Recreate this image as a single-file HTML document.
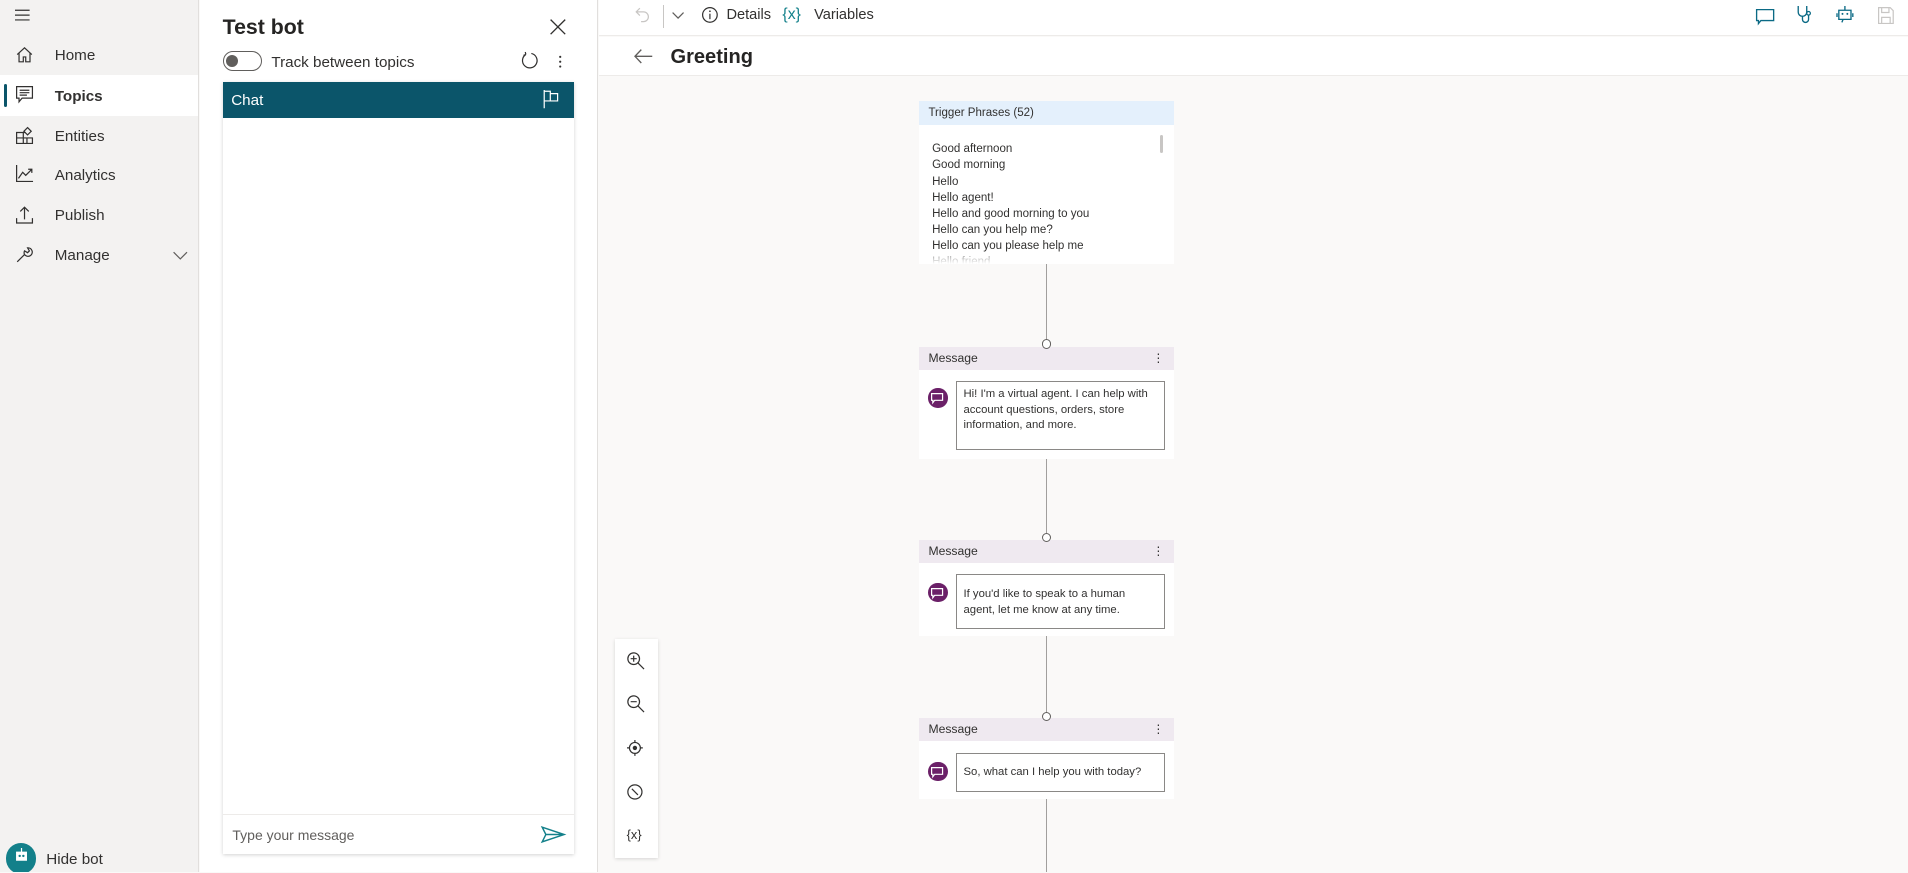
<!DOCTYPE html>
<html><head><meta charset="utf-8">
<style>
html,body{margin:0;padding:0;overflow:hidden;background:#faf9f8;}
#r{position:relative;width:1568px;height:717px;zoom:1.21684;font-family:"Liberation Sans",sans-serif;color:#323130;overflow:hidden;background:#faf9f8;}
.a{position:absolute;}
.nav{position:absolute;left:45px;font-size:12.5px;color:#323130;}
svg{position:absolute;overflow:visible;}
.msg{position:absolute;left:755px;width:210px;background:#fff;}
.mh{height:19px;background:#efe9f0;font-size:10px;line-height:19px;padding-left:8px;color:#323130;position:relative;}
.mh b{position:absolute;right:8px;top:0;font-weight:normal;font-size:10px;}
.tb{position:absolute;left:31px;width:171px;border:1px solid #8a8886;font-size:9.3px;line-height:13px;color:#323130;padding:4px 0 0 5px;box-sizing:border-box;}
.ic{position:absolute;left:8px;width:16px;height:16px;border-radius:50%;background:#6b2068;}
.vl{position:absolute;left:859.5px;width:1px;background:#a19f9d;}
.dot{position:absolute;left:856px;width:6px;height:6px;border:1px solid #605e5c;border-radius:50%;background:#fff;z-index:2;}
</style></head><body><div id="r">
<!-- sidebar -->
<div class="a" style="left:0;top:0;width:163px;height:717px;background:#f3f2f1;border-right:1px solid #e1dfdd;"></div>
<svg style="left:12px;top:7px" width="13" height="10"><path d="M0 1H12M0 5H12M0 9H12" stroke="#323130" stroke-width="1"/></svg>
<div class="a" style="left:0;top:62px;width:163px;height:33px;background:#fff;"></div>
<div class="a" style="left:3px;top:69px;width:3px;height:19px;background:#0b556a;border-radius:2px;"></div>
<svg style="left:13px;top:38px" width="14" height="14"><path d="M1 7L7 1.5L13 7M2.5 5.5V13H6V9H8V13H11.5V5.5" fill="none" stroke="#323130"/></svg>
<svg style="left:13px;top:71px" width="14" height="14"><path d="M0.5 0.5H13.5V10H5L2.5 13V10H0.5Z M3 3.5H11M3 5.5H11M3 7.5H9" fill="none" stroke="#323130"/></svg>
<svg style="left:13px;top:104px" width="14" height="14"><path d="M0.5 4.5H6V13.5H0.5Z M0.5 9H13.5V13.5H6 M9 8.5V13.5 M6 4.5H8 M9.5 0.5L12.5 3.5L9.5 6.5L6.5 3.5Z" fill="none" stroke="#323130"/></svg>
<svg style="left:13px;top:136px" width="14" height="14"><path d="M0.5 0V13.5H14 M2 11L5.5 6L8 8.5L13 3.5 M10 3.5H13V6.5" fill="none" stroke="#323130"/></svg>
<svg style="left:13px;top:169px" width="14" height="15"><path d="M7 11V1M3.5 4.5L7 1L10.5 4.5 M0.5 10V14H13.5V10" fill="none" stroke="#323130"/></svg>
<svg style="left:13px;top:202px" width="14" height="14"><path d="M1 13L7 7M7 7A3.5 3.5 0 1 0 9.5 1.5L11 4L9.5 5.5L7 4A3.5 3.5 0 0 0 7 7" fill="none" stroke="#323130"/></svg>
<div class="nav" style="top:39px">Home</div>
<div class="nav" style="top:72px;font-weight:bold;">Topics</div>
<div class="nav" style="top:105px">Entities</div>
<div class="nav" style="top:137px">Analytics</div>
<div class="nav" style="top:170px">Publish</div>
<div class="nav" style="top:203px">Manage</div>
<svg style="left:142px;top:206px" width="12" height="8"><path d="M0.5 1L6 6.5L11.5 1" fill="none" stroke="#605e5c"/></svg>
<div class="a" style="left:5px;top:693px;width:25px;height:25px;border-radius:50%;background:#13808a;"></div>
<svg style="left:11px;top:697px" width="14" height="16"><path d="M7 0V3M3 3.5H11V10H3Z" fill="#fff" stroke="#fff"/><circle cx="5.5" cy="6.5" r="1" fill="#13808a"/><circle cx="8.5" cy="6.5" r="1" fill="#13808a"/></svg>
<div class="a" style="left:38px;top:699px;font-size:12.5px;">Hide bot</div>
<!-- test bot panel -->
<div class="a" style="left:164px;top:0;width:327px;height:717px;background:#fff;border-right:1px solid #e1dfdd;"></div>
<div class="a" style="left:183px;top:12px;font-size:17.5px;font-weight:bold;color:#252423;">Test bot</div>
<svg style="left:452px;top:16px" width="13" height="13"><path d="M0.5 0.5L12.5 12.5M12.5 0.5L0.5 12.5" stroke="#323130" stroke-width="1.1"/></svg>
<div class="a" style="left:183px;top:42px;width:32px;height:16px;border:1px solid #605e5c;border-radius:9px;box-sizing:border-box;"></div>
<div class="a" style="left:186px;top:45px;width:10px;height:10px;border-radius:50%;background:#605e5c;"></div>
<div class="a" style="left:223px;top:44px;font-size:12.5px;">Track between topics</div>
<svg style="left:428px;top:43px" width="15" height="15"><path d="M4 2A6 6 0 1 0 8.5 1.2 M4 2L3.5 0 M4 2L2 2.8" fill="none" stroke="#323130"/></svg>
<svg style="left:459px;top:45px" width="3" height="12"><circle cx="1" cy="1.5" r="0.9" fill="#323130"/><circle cx="1" cy="5.5" r="0.9" fill="#323130"/><circle cx="1" cy="9.5" r="0.9" fill="#323130"/></svg>
<div class="a" style="left:183px;top:67px;width:289px;height:635px;background:#fff;box-shadow:0 1px 3px rgba(0,0,0,.18);"></div>
<div class="a" style="left:183px;top:67px;width:289px;height:30px;background:#0b556a;"></div>
<div class="a" style="left:190px;top:76px;font-size:12.5px;color:#fff;">Chat</div>
<svg style="left:446px;top:74px" width="14" height="16"><path d="M1 0V15 M1 1H6V9H1 M6 3H12V9H6" fill="none" stroke="#fff"/></svg>
<div class="a" style="left:183px;top:669px;width:289px;height:1px;background:#edebe9;"></div>
<div class="a" style="left:191px;top:680px;font-size:11.5px;color:#605e5c;">Type your message</div>
<svg style="left:445px;top:679px" width="20" height="14"><path d="M1 1L19 7L1 13L4 7Z M4 7H19" fill="none" stroke="#13808a" stroke-width="1.2"/></svg>
<!-- toolbar -->
<div class="a" style="left:492px;top:0;width:1076px;height:29px;background:#fff;border-bottom:1px solid #edebe9;"></div>
<svg style="left:522px;top:6px" width="13" height="13"><path d="M4 1L1 4L4 7 M1 4H7A4 4 0 0 1 7 12H5" fill="none" stroke="#c8c6c4"/></svg>
<div class="a" style="left:545px;top:4px;width:1px;height:19px;background:#c8c6c4;"></div>
<svg style="left:552px;top:10px" width="10" height="6"><path d="M0.5 0.5L5 5L9.5 0.5" fill="none" stroke="#605e5c"/></svg>
<svg style="left:577px;top:6px" width="13" height="13"><circle cx="6.5" cy="6.5" r="6" fill="none" stroke="#323130"/><path d="M6.5 5.5V10" stroke="#323130"/><circle cx="6.5" cy="3.5" r="0.7" fill="#323130"/></svg>
<div class="a" style="left:597px;top:6px;font-size:12px;">Details</div>
<div class="a" style="left:643px;top:5px;font-size:13px;color:#13808a;">{x}</div>
<div class="a" style="left:669px;top:6px;font-size:12px;">Variables</div>
<svg style="left:1443px;top:7px" width="15" height="13"><path d="M0.5 0.5H14.5V9.5H4L2 12V9.5H0.5Z" fill="none" stroke="#0b6a85" stroke-width="1.1"/></svg>
<svg style="left:1477px;top:5px" width="14" height="15"><path d="M1 0V5A3.5 3.5 0 0 0 8 5V0 M4.5 8.5V11A2.5 2.5 0 0 0 9.5 11V7" fill="none" stroke="#0b6a85" stroke-width="1.1"/><circle cx="9.5" cy="6" r="1.5" fill="none" stroke="#0b6a85"/></svg>
<svg style="left:1510px;top:5px" width="13" height="16"><path d="M6.5 0V3 M1.5 3.5H11.5V11H1.5Z M0 6V9 M13 6V9 M5 11L4 13.5" fill="none" stroke="#0b6a85" stroke-width="1.1"/><circle cx="4.5" cy="6.5" r=".8" fill="#0b6a85"/><circle cx="8.5" cy="6.5" r=".8" fill="#0b6a85"/></svg>
<svg style="left:1543px;top:6px" width="13" height="14"><path d="M0.5 0.5H10L12.5 3V13.5H0.5Z M3 0.5V4.5H9V0.5 M3 13.5V8.5H10V13.5" fill="none" stroke="#c8c6c4"/></svg>
<!-- header -->
<div class="a" style="left:492px;top:30px;width:1076px;height:32px;background:#fff;border-bottom:1px solid #edebe9;"></div>
<svg style="left:521px;top:40px" width="15" height="12"><path d="M6 0.5L0.8 6L6 11.5 M0.8 6H15" fill="none" stroke="#605e5c" stroke-width="1.1"/></svg>
<div class="a" style="left:551px;top:38px;font-size:16.5px;font-weight:bold;color:#252423;">Greeting</div>
<!-- trigger card -->
<div class="a" style="left:755px;top:83px;width:210px;height:134px;background:#fff;overflow:hidden;">
<div style="height:20px;background:#e4f0fc;font-size:9.5px;line-height:20px;padding-left:8px;">Trigger Phrases (52)</div>
<div style="padding:13px 0 0 11px;font-size:9.5px;line-height:13.3px;">Good afternoon<br>Good morning<br>Hello<br>Hello agent!<br>Hello and good morning to you<br>Hello can you help me?<br>Hello can you please help me<br>Hello friend</div>
<div style="position:absolute;left:0;top:124px;width:210px;height:10px;background:linear-gradient(rgba(255,255,255,.4),#fff);"></div>
<div style="position:absolute;left:198px;top:28px;width:3px;height:15px;background:#c8c6c4;border-radius:2px;"></div>
</div>
<div class="vl" style="top:217px;height:63px"></div><div class="dot" style="top:279px"></div>
<div class="msg" style="top:285px;height:92px;"><div class="mh">Message<b>⋮</b></div>
<div class="ic" style="top:34px"></div><div class="tb" style="top:28px;height:57px;">Hi! I'm a virtual agent. I can help with account questions, orders, store information, and more.</div></div>
<div class="vl" style="top:377px;height:61px"></div><div class="dot" style="top:438px"></div>
<div class="msg" style="top:444px;height:79px;"><div class="mh">Message<b>⋮</b></div>
<div class="ic" style="top:35px"></div><div class="tb" style="top:28px;height:45px;padding-top:10px;">If you'd like to speak to a human<br>agent, let me know at any time.</div></div>
<div class="vl" style="top:523px;height:63px"></div><div class="dot" style="top:585px"></div>
<div class="msg" style="top:590px;height:67px;"><div class="mh">Message<b>⋮</b></div>
<div class="ic" style="top:36px"></div><div class="tb" style="top:29px;height:32px;padding-top:9px;">So, what can I help you with today?</div></div>
<div class="vl" style="top:657px;height:60px"></div>
<svg style="left:765px;top:323px" width="10" height="9"><path d="M.5 .5H9.5V6H3L1.5 8V6H.5Z" fill="none" stroke="#fff"/></svg>
<svg style="left:765px;top:483px" width="10" height="9"><path d="M.5 .5H9.5V6H3L1.5 8V6H.5Z" fill="none" stroke="#fff"/></svg>
<svg style="left:765px;top:630px" width="10" height="9"><path d="M.5 .5H9.5V6H3L1.5 8V6H.5Z" fill="none" stroke="#fff"/></svg>
<!-- zoom panel -->
<div class="a" style="left:505px;top:525px;width:36px;height:180px;background:#fff;box-shadow:0 1px 3px rgba(0,0,0,.15);"></div>
<svg style="left:515px;top:536px" width="15" height="15"><circle cx="5.5" cy="5.5" r="4.8" fill="none" stroke="#323130"/><path d="M9 9L14 14 M3 5.5H8 M5.5 3V8" stroke="#323130"/></svg>
<svg style="left:515px;top:571px" width="15" height="15"><circle cx="5.5" cy="5.5" r="4.8" fill="none" stroke="#323130"/><path d="M9 9L14 14 M3 5.5H8" stroke="#323130"/></svg>
<svg style="left:515px;top:608px" width="13" height="13"><circle cx="6.5" cy="6.5" r="4.5" fill="none" stroke="#323130"/><circle cx="6.5" cy="6.5" r="1.8" fill="#323130"/><path d="M6.5 0V2M6.5 11V13M0 6.5H2M11 6.5H13" stroke="#323130"/></svg>
<svg style="left:515px;top:644px" width="13" height="13"><circle cx="6.5" cy="6.5" r="5.8" fill="none" stroke="#323130"/><path d="M4 4L9 9" stroke="#323130"/></svg>
<div class="a" style="left:515px;top:680px;font-size:10.5px;">{x}</div>
</div></body></html>
